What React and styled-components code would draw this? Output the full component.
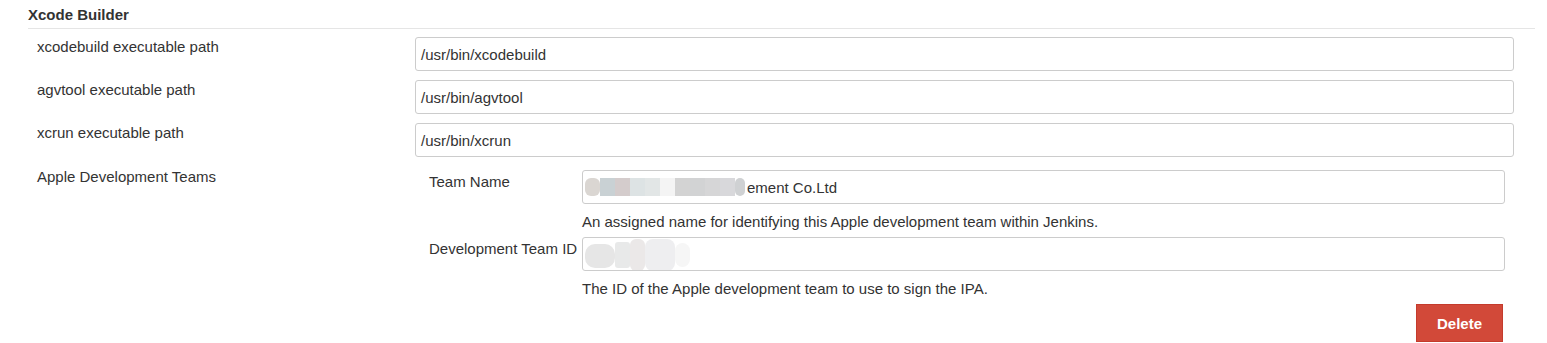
import React from "react";
import styled, {createGlobalStyle} from "styled-components";

const Global = createGlobalStyle`
  body {
    margin: 0;
    background: #fff;
    font-family: "Liberation Sans", Arial, Helvetica, sans-serif;
    font-size: 15px;
    color: #333;
  }
`

const Section = styled.div`
  padding: 6px 12px 0 28px;
  width: 1507px;
`

const Header = styled.div`
  font-weight: bold;
  font-size: 15px;
  line-height: 18px;
  padding-bottom: 4px;
  border-bottom: 1px solid #e5e5e5;
`

const Table = styled.div`
  margin-top: 8px;
`

const Row = styled.div`
  display: grid;
  grid-template-columns: ${p => p.$labelWidth || 387}px 1fr;
  padding-right: ${p => p.$right || 21}px;
  margin-bottom: ${p => p.$gap ?? 9}px;
`

const Label = styled.div`
  padding-left: ${p => p.$indent || 9}px;
  padding-top: ${p => p.$top || 1}px;
  line-height: 17px;
  white-space: nowrap;
`

const Field = styled.div`
  position: relative;
  display: flex;
  align-items: center;
  height: 34px;
  box-sizing: border-box;
  border: 1px solid #ccc;
  border-radius: 3px;
  padding: 0 5px;
  font-size: 15px;
  color: #333;
  background: #fff;
  overflow: hidden;
  white-space: nowrap;
`

const Nested = styled.div`
  padding-top: 4px;
`

const Description = styled.div`
  margin-top: 9px;
  margin-bottom: 7px;
  line-height: 17px;
`

const Mosaic = styled.div`
  position: absolute;
  left: ${p => p.$left}px;
  top: ${p => p.$top}px;
  display: flex;
  align-items: flex-start;
`

const Tile = styled.span`
  display: block;
  width: ${p => p.$w}px;
  height: ${p => p.$h}px;
  background: ${p => p.$c};
  border-radius: ${p => p.$r || 0}px;
  margin-top: ${p => p.$dy || 0}px;
`

const Actions = styled.div`
  display: flex;
  justify-content: flex-end;
  padding-right: 11px;
`

const DeleteButton = styled.button`
  width: 87px;
  height: 38px;
  background: #d24939;
  border: 1px solid #c43b2c;
  border-radius: 0;
  color: #fff;
  font-family: "Liberation Sans", Arial, sans-serif;
  font-weight: bold;
  font-size: 15px;
  cursor: pointer;
`

const paths = [
    ["xcodebuild executable path", "/usr/bin/xcodebuild"],
    ["agvtool executable path", "/usr/bin/agvtool"],
    ["xcrun executable path", "/usr/bin/xcrun"],
]

const nameTiles = [
    ["#dad6d2", 15, 6], ["#c9d1d4", 15], ["#d4cccc", 15], ["#dde3e4", 15], ["#e2e6e6", 15],
    ["#f4f4f4", 15], ["#d3d3d3", 15], ["#d2d3d4", 15], ["#d6d6d7", 15], ["#d8d8db", 15], ["#cfd1d3", 10, 5],
]

export default function App() {
    return (
        <>
            <Global/>
            <Section>
                <Header>Xcode Builder</Header>
                <Table>
                    {paths.map(([label, value]) => (
                        <Row key={label}>
                            <Label>{label}</Label>
                            <Field>{value}</Field>
                        </Row>
                    ))}
                    <Row $gap={0}>
                        <Label $top={2}>Apple Development Teams</Label>
                        <Nested>
                            <Row $labelWidth={167} $right={9} $gap={0}>
                                <Label $indent={14} $top={3}>Team Name</Label>
                                <div>
                                    <Field>
                                        <span style={{paddingLeft: 159}}>ement Co.Ltd</span>
                                        <Mosaic $left={2} $top={7}>
                                            {nameTiles.map(([c, w, r], i) => (
                                                <Tile key={i} $c={c} $w={w} $h={18} $r={r}/>
                                            ))}
                                        </Mosaic>
                                    </Field>
                                    <Description>An assigned name for identifying this Apple development team within Jenkins.</Description>
                                </div>
                            </Row>
                            <Row $labelWidth={167} $right={9} $gap={0}>
                                <Label $indent={14} $top={3}>Development Team ID</Label>
                                <div>
                                    <Field>
                                        <Mosaic $left={2} $top={1}>
                                            <Tile $c="#e6e6e6" $w={30} $h={24} $r={10} $dy={5}/>
                                            <Tile $c="#e8e9e9" $w={15} $h={26} $r={3} $dy={3}/>
                                            <Tile $c="#ebe8e8" $w={15} $h={32} $r={6}/>
                                            <Tile $c="#eeeef0" $w={30} $h={32} $r={8}/>
                                            <Tile $c="#f6f6f6" $w={15} $h={24} $r={8} $dy={4}/>
                                        </Mosaic>
                                    </Field>
                                    <Description>The ID of the Apple development team to use to sign the IPA.</Description>
                                </div>
                            </Row>
                            <Actions>
                                <DeleteButton>Delete</DeleteButton>
                            </Actions>
                        </Nested>
                    </Row>
                </Table>
            </Section>
        </>
    )
}
